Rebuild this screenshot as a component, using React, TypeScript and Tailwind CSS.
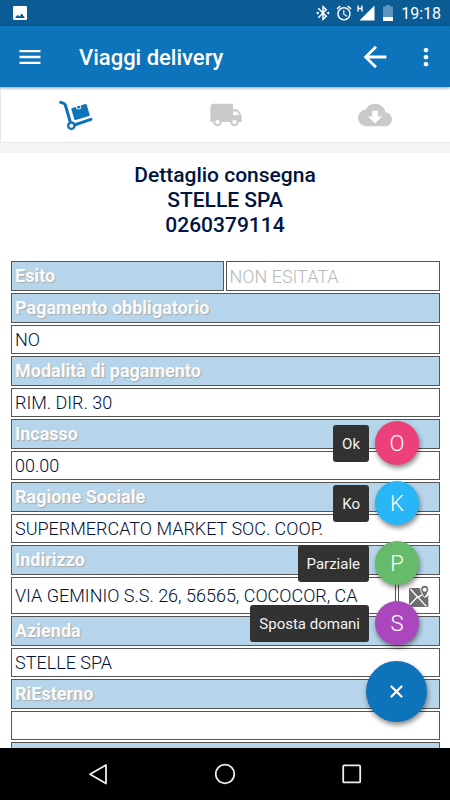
import React, { useState } from 'react';
import {
  MdAlarm,
  MdArrowBack,
  MdBluetoothConnected,
  MdCloudDownload,
  MdLocalShipping,
  MdMenu,
  MdMoreVert,
} from 'react-icons/md';

interface Field {
  label: string;
  value: string;
  map?: boolean;
}

const fields: Field[] = [
  { label: 'Pagamento obbligatorio', value: 'NO' },
  { label: 'Modalità di pagamento', value: 'RIM. DIR. 30' },
  { label: 'Incasso', value: '00.00' },
  { label: 'Ragione Sociale', value: 'SUPERMERCATO MARKET SOC. COOP.' },
  { label: 'Indirizzo', value: 'VIA GEMINIO S.S. 26, 56565, COCOCOR, CA', map: true },
  { label: 'Azienda', value: 'STELLE SPA' },
  { label: 'RiEsterno', value: '' },
];

const actions = [
  { letter: 'O', label: 'Ok', color: 'bg-[#ec407a]' },
  { letter: 'K', label: 'Ko', color: 'bg-[#29b6f6]' },
  { letter: 'P', label: 'Parziale', color: 'bg-[#66bb6a]' },
  { letter: 'S', label: 'Sposta domani', color: 'bg-[#ab47bc]' },
];

const labelCell =
  'h-[30px] border border-[#555] bg-[#b6d4ea] p-0 px-[3px] pb-px text-left text-lg leading-[27px] font-bold text-[#fafafa] [text-shadow:1px_1px_1px_#aaa]';
const valueCell = 'border border-[#555] bg-white p-0 px-[3px] text-lg leading-[27px] font-light text-[#001038]';

function PhotoIcon() {
  return (
    <svg width="14" height="14" viewBox="0 0 14 14">
      <rect width="14" height="14" rx="1.2" fill="#fff" />
      <path d="M2 12l2.6-3.2 1.7 1.6L8.8 7.4 12 12z" fill="#0b5c95" />
    </svg>
  );
}

function SignalIcon() {
  return (
    <svg width="18" height="16" viewBox="0 0 18 16">
      <path d="M1 .5v6M5 .5v6M1 3.5h4" stroke="#fff" strokeWidth="1.4" fill="none" />
      <path d="M17.5 0.5v15h-15z" fill="#fff" />
    </svg>
  );
}

function BatteryIcon() {
  return (
    <svg width="10" height="16" viewBox="0 0 10 16">
      <path d="M3 0h4v1.6h3V12H0V1.6h3z" fill="#5b94bd" />
      <path d="M0 12h10v4H0z" fill="#fff" />
    </svg>
  );
}

function DollyIcon() {
  return (
    <svg width="34" height="30" viewBox="0 0 102 90" fill="none">
      <path d="M5 7l9 3q4 1 5 5l14 48" stroke="#0d73bb" strokeWidth="9" strokeLinecap="round" />
      <path d="M46 75l50-17" stroke="#0d73bb" strokeWidth="9" strokeLinecap="round" />
      <circle cx="37" cy="77" r="9.5" stroke="#0d73bb" strokeWidth="7" fill="#fff" />
      <path d="M38 25l41-13q3-1 4 2l9 30q1 3-2 4L50 60q-3 1-4-2l-9-30q-1-2 1-3z" fill="#0d73bb" />
      <path d="M51 18l3 9 5-1 4 1 3-4-3-9" stroke="#fff" strokeWidth="3" />
    </svg>
  );
}

function MapIcon() {
  return (
    <svg width="20" height="22" viewBox="0 0 60 66" fill="none">
      <path d="M3 9h30l18 29 7-8v33q0 3-3 3H3q-3 0-3-3V12q0-3 3-3z" fill="#6e6e6e" />
      <path d="M4 12l48 52M25 36L3 59M26 38l14-9" stroke="#fff" strokeWidth="4" />
      <path d="M47 1c7 0 12 5 12 12 0 9-12 25-12 25S35 22 35 13C35 6 40 1 47 1z" fill="#6e6e6e" stroke="#fff" strokeWidth="3" />
      <circle cx="47" cy="14" r="6" fill="#fff" />
    </svg>
  );
}

function StatusBar() {
  return (
    <div className="flex h-[26px] shrink-0 items-center justify-between bg-[#0b5c95] pr-[9px] pl-[13px] text-white">
      <PhotoIcon />
      <div className="flex items-center">
        <MdBluetoothConnected size={18} />
        <MdAlarm size={18} className="ml-[3px]" />
        <span className="ml-1">
          <SignalIcon />
        </span>
        <span className="ml-2">
          <BatteryIcon />
        </span>
        <span className="ml-2 pt-0.5 text-base leading-6">19:18</span>
      </div>
    </div>
  );
}

function Tabs() {
  return (
    <nav className="flex h-14 shrink-0 border-b border-l border-[#e8e8e8] bg-white text-[#cacaca]">
      <button aria-label="Consegne" className="flex flex-1 items-center justify-center">
        <DollyIcon />
      </button>
      <button aria-label="Trasporto" className="flex flex-1 items-center justify-center">
        <MdLocalShipping size={34} />
      </button>
      <button aria-label="Scarica" className="flex flex-1 items-center justify-center">
        <MdCloudDownload size={34} />
      </button>
    </nav>
  );
}

function DetailTable() {
  return (
    <table className="w-full table-fixed border-separate border-spacing-[2px]">
      <colgroup>
        <col className="w-1/2" />
        <col />
        <col className="w-[42px]" />
      </colgroup>
      <tbody>
        <tr>
          <th className={labelCell}>
            <label htmlFor="esito">Esito</label>
          </th>
          <td colSpan={2} className={valueCell}>
            <input
              id="esito"
              readOnly
              placeholder="NON ESITATA"
              className="block w-full bg-transparent outline-none placeholder:text-[#b8b8b8]"
            />
          </td>
        </tr>
        {fields.map((f) => (
          <React.Fragment key={f.label}>
            <tr>
              <th colSpan={3} className={labelCell}>{f.label}</th>
            </tr>
            <tr className={f.map ? 'h-[37px]' : 'h-[29px]'}>
              <td colSpan={f.map ? 2 : 3} className={valueCell}>{f.value}</td>
              {f.map && (
                <td className={valueCell}>
                  <button aria-label="Mappa" className="flex w-full justify-center">
                    <MapIcon />
                  </button>
                </td>
              )}
            </tr>
          </React.Fragment>
        ))}
        <tr>
          <th colSpan={3} className={labelCell}></th>
        </tr>
      </tbody>
    </table>
  );
}

function SpeedDial() {
  const [open, setOpen] = useState(true);

  return (
    <div className="absolute right-[23px] bottom-[26px] flex flex-col items-end gap-4">
      {open &&
        actions.map((a) => (
          <div key={a.letter} className="mr-2 flex items-center gap-1.5">
            <label
              htmlFor={`action-${a.letter}`}
              className="rounded-[3px] bg-[#323232] px-[9px] pt-[9px] pb-[7px] text-[15px] leading-[21px] text-[#f2f2f2]"
            >
              {a.label}
            </label>
            <button
              id={`action-${a.letter}`}
              className={`h-11 w-11 rounded-full text-[22px] font-light text-white shadow-[1px_3px_5px_rgba(0,0,0,0.45)] ${a.color}`}
            >
              {a.letter}
            </button>
          </div>
        ))}
      <button
        aria-label="Chiudi"
        onClick={() => setOpen(!open)}
        className="flex h-[61px] w-[61px] items-center justify-center rounded-full bg-[#0d73bb] shadow-[1px_3px_5px_rgba(0,0,0,0.45)]"
      >
        <svg width="13" height="13" viewBox="0 0 13 13">
          <path d="M1.5 1.5l10 10M11.5 1.5l-10 10" stroke="#fff" strokeWidth="2.2" strokeLinecap="round" />
        </svg>
      </button>
    </div>
  );
}

function SystemNav() {
  return (
    <div className="flex h-[52px] shrink-0 items-center justify-center gap-[103px] bg-black">
      <button aria-label="Indietro">
        <svg width="24" height="24" viewBox="0 0 24 24" fill="none" stroke="#eee" strokeWidth="1.8" strokeLinejoin="round">
          <path d="M20 3v18.5L4 12.2z" />
        </svg>
      </button>
      <button aria-label="Home">
        <svg width="24" height="24" viewBox="0 0 24 24" fill="none" stroke="#eee" strokeWidth="1.8">
          <circle cx="12" cy="12" r="9.3" />
        </svg>
      </button>
      <button aria-label="Recenti">
        <svg width="24" height="24" viewBox="0 0 24 24" fill="none" stroke="#eee" strokeWidth="1.8">
          <rect x="3.2" y="3.4" width="17" height="17" rx="1" />
        </svg>
      </button>
    </div>
  );
}

export default function App() {
  return (
    <div className="flex h-screen flex-col bg-white font-['Roboto',sans-serif]">
      <StatusBar />
      <header className="z-10 flex h-[61px] shrink-0 items-center bg-[#0d73bb] pr-[10px] pl-4 text-white shadow-[0_1px_3px_rgba(0,0,0,0.4)]">
        <button aria-label="Menu">
          <MdMenu size={28} />
        </button>
        <h1 className="ml-[35px] flex-1 pt-[3px] text-[22px] leading-7 font-medium">Viaggi delivery</h1>
        <button aria-label="Torna indietro">
          <MdArrowBack size={34} />
        </button>
        <button aria-label="Altro" className="ml-5">
          <MdMoreVert size={28} />
        </button>
      </header>
      <Tabs />
      <div className="relative flex min-h-0 flex-1 flex-col">
        <main className="flex-1 overflow-y-auto [scrollbar-width:none]">
          <div className="h-[10px] bg-[#f4f4f4]" />
          <h2 className="pt-[10px] pb-[21px] text-center text-[21px] leading-[25px] font-medium text-[#001440]">
            Dettaglio consegna
            <br />
            STELLE SPA
            <br />
            0260379114
          </h2>
          <div className="pr-2 pl-[9px]">
            <DetailTable />
          </div>
        </main>
        <SpeedDial />
      </div>
      <SystemNav />
    </div>
  );
}
